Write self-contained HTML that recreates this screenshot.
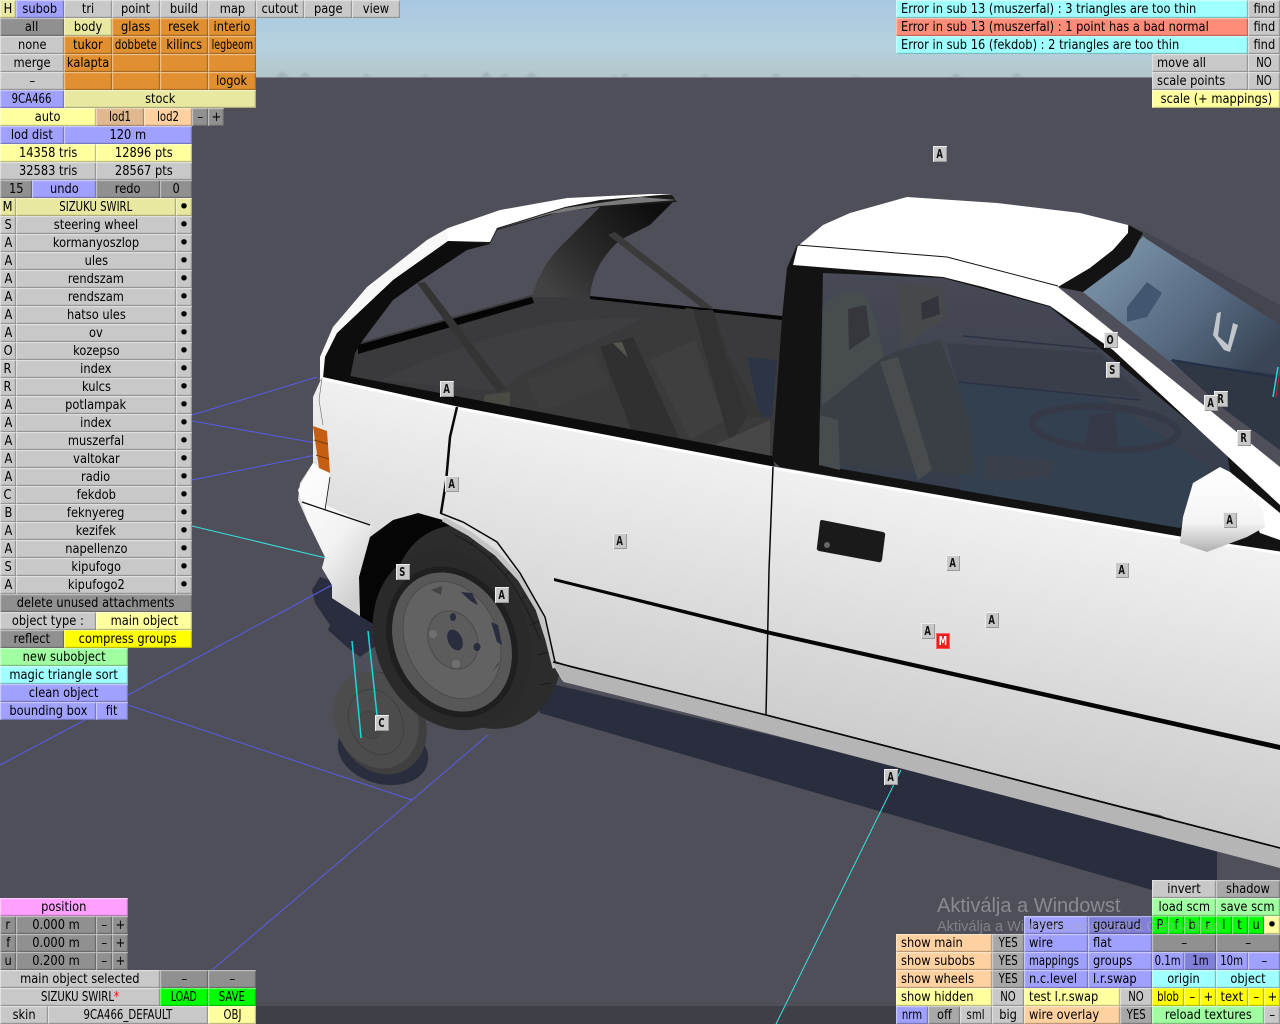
<!DOCTYPE html>
<html><head><meta charset="utf-8"><style>
html,body{margin:0;padding:0;width:1280px;height:1024px;overflow:hidden;background:#4f4f59}
svg{position:absolute;left:0;top:0}
.b{position:absolute;height:18px;display:flex;justify-content:center;align-items:center;font:13px/18px "DejaVu Sans",sans-serif;color:#000;white-space:pre;overflow:hidden;box-sizing:border-box;box-shadow:inset 2px 2px 1px -1px rgba(255,255,255,.5),inset -2px -2px 1px -1px rgba(0,0,0,.3)}
.b i{font-style:normal;flex:none;position:relative;top:1px;transform:scaleX(.88);transform-origin:50% 50%}
.b i.a{transform:scaleX(.78)}
.b i.w{transform:scaleX(.73)}
.b i.q{font-size:19px;transform:none;top:0}
.l{justify-content:flex-start;padding-left:5px}
.l i{transform-origin:0 50%!important}
.g{background:#c8c8c8}.d{background:#909090}.h{background:#a8a8a8}.u{background:#a0a0ff}.v{background:#8080d8}.y{background:#ffffa0}.p{background:#e8e8a0}.o{background:#e09030}.e{background:#ffd0a0}.t{background:#e0b890}.n{background:#a0ffa0}.c{background:#a0ffff}.r{background:#ff8c78}.s{background:#ffff00}.k{background:#00ff00}.f{background:#ffa0ff}
.m{position:absolute;width:14px;height:16px;margin:-.5px 0 0 -.5px;background:#c8c8c8;display:flex;justify-content:center;font:bold 12px/16px "DejaVu Sans",sans-serif;color:#111;box-shadow:inset 1px 1px 0 #eee,inset -1px -1px 0 #999}
.m i{font-style:normal;flex:none;transform:scaleX(.7)}
.wm{position:absolute;color:#8a8a92;font-family:"Liberation Sans",sans-serif;white-space:pre}
</style></head><body>
<svg width="1280" height="1024" viewBox="0 0 1280 1024">
<defs>
<linearGradient id="sky" x1="0" y1="0" x2="0" y2="1"><stop offset="0" stop-color="#a9c8e2"/><stop offset=".6" stop-color="#b5d0de"/><stop offset="1" stop-color="#b3c6ca"/></linearGradient>
<linearGradient id="body" gradientUnits="userSpaceOnUse" x1="860" y1="470" x2="800" y2="780"><stop offset="0" stop-color="#f2f2f2"/><stop offset=".5" stop-color="#dcdcdc"/><stop offset="1" stop-color="#c6c6c6"/></linearGradient>
<linearGradient id="glass" gradientUnits="userSpaceOnUse" x1="1090" y1="250" x2="1230" y2="390"><stop offset="0" stop-color="#7e97ad"/><stop offset=".55" stop-color="#5a6e86"/><stop offset="1" stop-color="#3a4658"/></linearGradient>
<linearGradient id="side" gradientUnits="userSpaceOnUse" x1="0" y1="275" x2="0" y2="520"><stop offset="0" stop-color="#474955"/><stop offset=".45" stop-color="#3e434f"/><stop offset="1" stop-color="#333a49"/></linearGradient>
<linearGradient id="pil" gradientUnits="userSpaceOnUse" x1="650" y1="205" x2="555" y2="295"><stop offset="0" stop-color="#0e0e0e"/><stop offset=".6" stop-color="#2a2a2a"/><stop offset="1" stop-color="#424242"/></linearGradient>
<linearGradient id="mir" x1="0" y1="0" x2="0" y2="1"><stop offset="0" stop-color="#fff"/><stop offset=".65" stop-color="#f4f4f4"/><stop offset="1" stop-color="#b0b0b0"/></linearGradient>
<linearGradient id="rr" x1="0" y1="0" x2=".6" y2="1"><stop offset="0" stop-color="#fff"/><stop offset=".6" stop-color="#f2f2f2"/><stop offset="1" stop-color="#cfcfcf"/></linearGradient>
<filter id="bl"><feGaussianBlur stdDeviation="1.2"/></filter>
</defs>
<rect width="1280" height="78" fill="url(#sky)"/>
<g fill="#a2b2b7" filter="url(#bl)"><path d="M275 78L282 71L290 78ZM298 78L305 72L312 78ZM362 78L366 73L371 78ZM420 78L425 74L430 78ZM480 78L486 71L492 78ZM500 78L505 73L510 78ZM525 78L531 72L538 78ZM610 78L615 75L620 78ZM700 78L705 74L710 78ZM770 78L776 73L782 78ZM950 78L956 73L962 78ZM1010 78L1017 73L1024 78ZM620 78L625 73L630 78ZM850 78L855 75L860 78Z"/></g>
<rect y="77" width="1280" height="1.5" fill="#7c8288"/>
<rect y="78" width="1280" height="946" fill="#4f4f59"/>
<rect y="1006" width="1280" height="18" fill="#3f3f47"/>
<!-- shadows -->
<path d="M535 680L1217 840V910L1152 890L540 713Z" fill="#2a2d3e"/>
<path d="M320 577L312 590L315 603L330 625L328 630L347 647L360 657L380 643L400 620L360 590Z" fill="#2a2d3e"/>
<ellipse cx="383" cy="752" rx="46" ry="32" fill="#2a2d3e" transform="rotate(15 383 752)"/>
<!-- ground lines -->
<g stroke="#5a5ae8" stroke-width="1" fill="none">
<path d="M192 415L317 377M192 421L316 443M192 480L316 455M128 695L332 585M128 705L412 800L488 735M412 800L212 970M0 765L85 720"/>
</g>
<path d="M192 526L326 558M901 770L776 1024" stroke="#38e0e0" stroke-width="1" fill="none"/>
<!-- brake drum -->
<ellipse cx="381" cy="723" rx="44" ry="53" fill="#3f3f3f" transform="rotate(-25 381 723)"/>
<ellipse cx="376" cy="720" rx="41" ry="50" fill="#4c4c4c" transform="rotate(-25 376 720)"/>
<ellipse cx="376" cy="722" rx="26" ry="34" fill="none" stroke="#404040" transform="rotate(-25 376 722)"/>
<ellipse cx="370" cy="725" rx="11" ry="14" fill="#484848" stroke="#404040" transform="rotate(-25 370 725)"/>
<path d="M352 641L361 738M368 631L377 715" stroke="#17d8d8" stroke-width="1.5" fill="none"/>
<!-- interior rear -->
<path d="M355 353L358 343L532 295L590 297L782 318L772 460L350 378Z" fill="#3a3a3c"/>
<path d="M358 345L532 297L534 303L358 354Z" fill="#050505"/>
<path d="M590 296L782 316V320L590 299Z" fill="#050505"/>
<path d="M380 380Q480 335 560 322Q640 315 640 320L520 375L505 392Z" fill="#3e3e40"/>
<path d="M747 357L777 360L772 417L760 417Z" fill="#2c3546"/>
<path d="M600 207L673 202L650 225L620 240Q592 265 590 297L532 297Q540 265 567 240Z" fill="url(#pil)"/>
<path d="M417 283L425 282L507 390L497 392Z" fill="#343434"/>
<path d="M608 235L615 232L713 308L702 308Z" fill="#3a3a3a"/>
<path d="M507 387Q515 375 527 375L593 350L613 343L633 330L687 308L713 312L747 417L770 420L771 458L540 412L500 400Z" fill="#3a3a3a"/>
<path d="M527 380L593 352L610 385L560 405L540 410Z" fill="#3d3d3d"/>
<path d="M650 360L695 340L725 420L690 440Z" fill="#3f3f3f"/>
<path d="M600 347L633 337L680 440L632 432Z" fill="#303030"/>
<path d="M693 310L713 310L747 417L730 443L718 400Z" fill="#323232"/>
<path d="M713 312L725 350L763 417L748 417L725 355Z" fill="#363636"/>
<path d="M710 447L770 420L770 457Z" fill="#474747"/>
<path d="M485 395L510 392L510 408L483 404Z" fill="#4a4a44"/>
<path d="M613 343L622 342L628 358Z" fill="#56564e"/>
<!-- rear black pillars -->
<path d="M448 240L490 244L467 250L417 283L393 300L363 340L355 353L350 378L323 378L325 353L337 333L393 280Z" fill="#0d0d0d"/>
<path d="M350 376L772 456L775 467L457 407L323 378Z" fill="#0d0d0d"/>
<path d="M672 195L677 202L600 207L560 212L497 230L490 244L448 240L448 228L500 210L567 198L650 194Z" fill="#1a1a1a"/>
<path d="M448 228L500 210L567 198L650 194L672 194L600 200L565 207L497 228L490 242L448 241Z" fill="#fff"/>
<path d="M497 229L565 208L640 197L677 200L600 206L550 214Z" fill="#7b7b7b"/>
<path d="M320 378L320 357L333 327L367 287L427 240L448 228L448 241L393 280L337 333L325 357L323 378Z" fill="#f8f8f8"/>
<!-- front window & roof -->
<path d="M772 460L782 318L787 268L797 245L1058 287L1280 467V552L1180 537L780 467Z" fill="#131313"/>
<path d="M819 465L823 273L943 278L1050 307L1227 453L1230 472L1180 528Z" fill="url(#side)"/>
<path d="M957 383L1100 395L1210 467L1180 528L960 490Z" fill="#334050"/>
<path d="M947 343L1100 353L1143 397L957 383Z" fill="#3a3e4b"/>
<path d="M963 336L1097 349" stroke="#2a3244" stroke-width="1.5" fill="none"/>
<path d="M958 382L1140 400" stroke="#2a3244" stroke-width="1.5" fill="none"/>
<path d="M823 310Q830 292 860 290Q870 295 880 340L885 360L850 392L822 408Z" fill="#474c4f"/>
<path d="M848 309L866 305L870 336L849 350Z" fill="#35373d"/>
<path d="M897 282L943 287L947 317L900 350Z" fill="#45494c"/>
<path d="M921 303L938 296L940 314L922 320Z" fill="#33353c"/>
<path d="M820 407L883 357L900 350L940 340L970 420L975 475L819 465Z" fill="#3a3f45"/>
<path d="M880 362L898 357L932 470L918 480Z" fill="#484c4e"/>
<path d="M820 415L838 420L840 470L819 465Z" fill="#474c4f"/>
<path d="M985 455L1055 460L1050 478L985 480Z" fill="#3a3f4c"/>
<ellipse cx="1105" cy="428" rx="73" ry="21" fill="none" stroke="#363a48" stroke-width="7" transform="rotate(4 1105 428)"/>
<path d="M1090 415L1115 412L1118 445L1085 447Z" fill="#363a48"/>
<path d="M1145 235L1280 315V450L1083 292Z" fill="url(#glass)"/>
<path d="M1138 228L1280 305V325L1145 238Z" fill="#45454f"/>
<path d="M1127 307L1147 282L1162 293L1147 317L1127 322Z" fill="#435670"/>
<path d="M1217 313L1213 335L1224 350L1230 352L1238 325L1233 323L1228 345L1218 336L1221 312Z" fill="#c0c6cc"/>
<path d="M1170 360L1280 375V450L1225 410Z" fill="#2f3745"/>
<path d="M1172 360L1280 378" stroke="#223048" stroke-width="2" fill="none"/>
<path d="M1278 367L1273 397" stroke="#1ed8e0" stroke-width="1.5" fill="none"/>
<path d="M1280 370L1276 397" stroke="#d02030" stroke-width="1" fill="none"/>
<path d="M798 246L823 225L850 213L907 197L997 203L1080 213L1128 225L1128 233L1113 250L1090 268L1058 287Z" fill="#fff"/>
<path d="M1129 225L1143 233L1130 257L1083 292L1058 287L1090 268L1113 250L1128 233Z" fill="#131313"/>
<path d="M798 245L947 258L1058 287L1280 467V505L1113 350L1050 306L983 287L943 277L793 265Z" fill="#fff"/>
<path d="M798 245L947 257L1058 286" fill="none" stroke="#111" stroke-width="1"/>
<path d="M1230 472L1280 513V540L1260 533Z" fill="#fff"/>
<!-- arch & tyre (under body) -->
<path d="M359 577L370 537L393 520L418 513L443 517L477 530L470 560L400 640L360 616Z" fill="#050505"/>
<ellipse cx="477" cy="627" rx="80" ry="106" fill="#2c2c2c" transform="rotate(-25 477 627)"/>
<ellipse cx="452" cy="640" rx="76" ry="93" fill="#2a2a2a" transform="rotate(-25 452 640)"/>
<path d="M455 535Q510 560 540 640M470 545L476 538M490 558L498 551M505 575L514 568M520 600L530 593M530 625L541 620M538 655L549 652M540 685L551 683" stroke="#1c1c1c" stroke-width="1" fill="none"/>
<ellipse cx="452" cy="642" rx="63" ry="78" fill="#1f1f1f" transform="rotate(-25 452 642)"/>
<ellipse cx="452" cy="642" rx="57" ry="72" fill="#585858" transform="rotate(-25 452 642)"/>
<ellipse cx="452" cy="640" rx="46" ry="61" fill="#626262" stroke="#4c4c4c" transform="rotate(-25 452 640)"/>
<ellipse cx="453" cy="640" rx="24" ry="30" fill="#5c5c5c" stroke="#4a4a4a" transform="rotate(-25 453 640)"/>
<ellipse cx="455" cy="640" rx="7" ry="11" fill="#2a2d3e" transform="rotate(-25 455 640)"/>
<ellipse cx="453" cy="617" rx="3" ry="4" fill="#2a2d3e"/><ellipse cx="477" cy="647" rx="3.5" ry="4" fill="#2a2d3e"/><circle cx="456" cy="664" r="4" fill="#707070"/><circle cx="433" cy="634" r="4" fill="#707070"/>
<path d="M461 592Q470 602 478 605L472 593ZM491 622L497 642L502 645L498 625ZM498 665L492 672L499 662Z" fill="#2a2d3e"/>
<path d="M431 590L442 586L441 595Z" fill="#444"/>
<!-- body -->
<path d="M322 377L457 407L773 467L1180 537L1280 552V868L1160 815L564 682L562 680L555 668L548 640L538 610L520 580L497 555L470 535L443 520L418 513L393 520L370 537L359 577L360 616L332 598L332 585L322 568L325 557L307 520L298 500L300 483L313 463L313 397Z" fill="url(#body)"/>
<path d="M298 490L313 463L330 473L326 505L372 526L358 577L360 616L332 598L332 585L322 568L325 557L307 520Z" fill="url(#rr)"/>
<path d="M320 378L457 408L773 468L1180 538L1280 553" fill="none" stroke="#fff" stroke-width="3"/>
<path d="M443 519L470 534L497 554L520 579L538 609L548 640L555 668" fill="none" stroke="#c4c4c4" stroke-width="5"/>
<!-- taillight -->
<path d="M313 426L327 431L330 473L319 468Z" fill="#c55e10"/>
<path d="M314 440L328 444M316 455L329 459" stroke="#7a3a08" stroke-width="1"/>
<!-- body lines -->
<g fill="none" stroke="#080808">
<path d="M457 407L450 437L446 482L441 513" stroke-width="2.5"/>
<path d="M440 513L463 522L497 542L520 573L545 617L555 662L575 668L766 715L1280 848" stroke-width="1.5"/>
<path d="M773 467L769 570L766 715" stroke-width="1.5"/>
<path d="M330 477L325 510" stroke-width=".8"/>
<path d="M302 502L370 525" stroke-width="1.2"/>
</g>
<path d="M322 378L319 400L323 425" fill="none" stroke="#666" stroke-width=".6"/>
<path d="M554 578L766 630L1280 745V750L766 634L554 581Z" fill="#050505"/>
<path d="M564 682L766 733L1280 868V849L766 716L553 663Z" fill="#b5b5b5"/>
<path d="M553 662L766 715L1280 848" fill="none" stroke="#080808" stroke-width="1.5"/>
<!-- handle -->
<path d="M822 520L883 532Q886 533 885 536L882 560Q881 563 878 562L819 551Q816 550 817 547L820 522Q820 520 822 520Z" fill="#1a1a1a"/>
<circle cx="827" cy="545" r="3" fill="#666"/>
<!-- mirror -->
<path d="M1193 483L1220 467L1230 472L1263 510L1265 527L1247 537L1207 552L1180 543L1183 517Z" fill="url(#mir)"/>
</svg>
<div class="wm" style="left:937px;top:895px;font-size:20px">Aktiválja a Windowst</div>

<!-- top left -->
<div class="b p" style="left:0;top:0;width:16px"><i>H</i></div><div class="b u" style="left:16px;top:0;width:48px"><i>subob</i></div><div class="b g" style="left:64px;top:0;width:48px"><i>tri</i></div><div class="b g" style="left:112px;top:0;width:48px"><i>point</i></div><div class="b g" style="left:160px;top:0;width:48px"><i>build</i></div><div class="b g" style="left:208px;top:0;width:48px"><i>map</i></div><div class="b g" style="left:256px;top:0;width:48px"><i>cutout</i></div><div class="b g" style="left:304px;top:0;width:48px"><i>page</i></div><div class="b g" style="left:352px;top:0;width:48px"><i>view</i></div>
<div class="b d" style="left:0;top:18px;width:64px"><i>all</i></div><div class="b p" style="left:64px;top:18px;width:48px"><i>body</i></div><div class="b o" style="left:112px;top:18px;width:48px"><i>glass</i></div><div class="b o" style="left:160px;top:18px;width:48px"><i>resek</i></div><div class="b o" style="left:208px;top:18px;width:48px"><i>interio</i></div>
<div class="b g" style="left:0;top:36px;width:64px"><i>none</i></div><div class="b o" style="left:64px;top:36px;width:48px"><i>tukor</i></div><div class="b o" style="left:112px;top:36px;width:48px"><i class="a">dobbete</i></div><div class="b o" style="left:160px;top:36px;width:48px"><i>kilincs</i></div><div class="b o" style="left:208px;top:36px;width:48px"><i class="w">legbeom</i></div>
<div class="b g" style="left:0;top:54px;width:64px"><i>merge</i></div><div class="b o" style="left:64px;top:54px;width:48px"><i>kalapta</i></div><div class="b o" style="left:112px;top:54px;width:48px"></div><div class="b o" style="left:160px;top:54px;width:48px"></div><div class="b o" style="left:208px;top:54px;width:48px"></div>
<div class="b g" style="left:0;top:72px;width:64px"><i>–</i></div><div class="b o" style="left:64px;top:72px;width:48px"></div><div class="b o" style="left:112px;top:72px;width:48px"></div><div class="b o" style="left:160px;top:72px;width:48px"></div><div class="b o" style="left:208px;top:72px;width:48px"><i>logok</i></div>
<div class="b u" style="left:0;top:90px;width:64px"><i class="a">9CA466</i></div><div class="b p" style="left:64px;top:90px;width:192px"><i>stock</i></div>
<div class="b y" style="left:0;top:108px;width:96px"><i>auto</i></div><div class="b t" style="left:96px;top:108px;width:48px"><i class="a">lod1</i></div><div class="b e" style="left:144px;top:108px;width:48px"><i class="a">lod2</i></div><div class="b d" style="left:192px;top:108px;width:16px"><i>–</i></div><div class="b d" style="left:208px;top:108px;width:16px"><i>+</i></div>
<div class="b u" style="left:0;top:126px;width:64px"><i>lod dist</i></div><div class="b u" style="left:64px;top:126px;width:128px"><i>120 m</i></div>
<div class="b y" style="left:0;top:144px;width:96px"><i>14358 tris</i></div><div class="b y" style="left:96px;top:144px;width:96px"><i>12896 pts</i></div>
<div class="b g" style="left:0;top:162px;width:96px"><i>32583 tris</i></div><div class="b g" style="left:96px;top:162px;width:96px"><i>28567 pts</i></div>
<div class="b d" style="left:0;top:180px;width:32px"><i>15</i></div><div class="b u" style="left:32px;top:180px;width:64px"><i>undo</i></div><div class="b d" style="left:96px;top:180px;width:64px"><i>redo</i></div><div class="b d" style="left:160px;top:180px;width:32px"><i>0</i></div>
<div class="b p" style="left:0;top:198px;width:16px"><i>M</i></div><div class="b p" style="left:16px;top:198px;width:160px"><i class="a">SIZUKU SWIRL</i></div><div class="b p" style="left:176px;top:198px;width:16px"><i class="q">•</i></div>
<!-- list -->
<div class="b g" style="left:0;top:216px;width:16px"><i>S</i></div><div class="b g" style="left:16px;top:216px;width:160px"><i>steering wheel</i></div><div class="b g" style="left:176px;top:216px;width:16px"><i class="q">•</i></div>
<div class="b g" style="left:0;top:234px;width:16px"><i>A</i></div><div class="b g" style="left:16px;top:234px;width:160px"><i>kormanyoszlop</i></div><div class="b g" style="left:176px;top:234px;width:16px"><i class="q">•</i></div>
<div class="b g" style="left:0;top:252px;width:16px"><i>A</i></div><div class="b g" style="left:16px;top:252px;width:160px"><i>ules</i></div><div class="b g" style="left:176px;top:252px;width:16px"><i class="q">•</i></div>
<div class="b g" style="left:0;top:270px;width:16px"><i>A</i></div><div class="b g" style="left:16px;top:270px;width:160px"><i>rendszam</i></div><div class="b g" style="left:176px;top:270px;width:16px"><i class="q">•</i></div>
<div class="b g" style="left:0;top:288px;width:16px"><i>A</i></div><div class="b g" style="left:16px;top:288px;width:160px"><i>rendszam</i></div><div class="b g" style="left:176px;top:288px;width:16px"><i class="q">•</i></div>
<div class="b g" style="left:0;top:306px;width:16px"><i>A</i></div><div class="b g" style="left:16px;top:306px;width:160px"><i>hatso ules</i></div><div class="b g" style="left:176px;top:306px;width:16px"><i class="q">•</i></div>
<div class="b g" style="left:0;top:324px;width:16px"><i>A</i></div><div class="b g" style="left:16px;top:324px;width:160px"><i>ov</i></div><div class="b g" style="left:176px;top:324px;width:16px"><i class="q">•</i></div>
<div class="b g" style="left:0;top:342px;width:16px"><i>O</i></div><div class="b g" style="left:16px;top:342px;width:160px"><i>kozepso</i></div><div class="b g" style="left:176px;top:342px;width:16px"><i class="q">•</i></div>
<div class="b g" style="left:0;top:360px;width:16px"><i>R</i></div><div class="b g" style="left:16px;top:360px;width:160px"><i>index</i></div><div class="b g" style="left:176px;top:360px;width:16px"><i class="q">•</i></div>
<div class="b g" style="left:0;top:378px;width:16px"><i>R</i></div><div class="b g" style="left:16px;top:378px;width:160px"><i>kulcs</i></div><div class="b g" style="left:176px;top:378px;width:16px"><i class="q">•</i></div>
<div class="b g" style="left:0;top:396px;width:16px"><i>A</i></div><div class="b g" style="left:16px;top:396px;width:160px"><i>potlampak</i></div><div class="b g" style="left:176px;top:396px;width:16px"><i class="q">•</i></div>
<div class="b g" style="left:0;top:414px;width:16px"><i>A</i></div><div class="b g" style="left:16px;top:414px;width:160px"><i>index</i></div><div class="b g" style="left:176px;top:414px;width:16px"><i class="q">•</i></div>
<div class="b g" style="left:0;top:432px;width:16px"><i>A</i></div><div class="b g" style="left:16px;top:432px;width:160px"><i>muszerfal</i></div><div class="b g" style="left:176px;top:432px;width:16px"><i class="q">•</i></div>
<div class="b g" style="left:0;top:450px;width:16px"><i>A</i></div><div class="b g" style="left:16px;top:450px;width:160px"><i>valtokar</i></div><div class="b g" style="left:176px;top:450px;width:16px"><i class="q">•</i></div>
<div class="b g" style="left:0;top:468px;width:16px"><i>A</i></div><div class="b g" style="left:16px;top:468px;width:160px"><i>radio</i></div><div class="b g" style="left:176px;top:468px;width:16px"><i class="q">•</i></div>
<div class="b g" style="left:0;top:486px;width:16px"><i>C</i></div><div class="b g" style="left:16px;top:486px;width:160px"><i>fekdob</i></div><div class="b g" style="left:176px;top:486px;width:16px"><i class="q">•</i></div>
<div class="b g" style="left:0;top:504px;width:16px"><i>B</i></div><div class="b g" style="left:16px;top:504px;width:160px"><i>feknyereg</i></div><div class="b g" style="left:176px;top:504px;width:16px"><i class="q">•</i></div>
<div class="b g" style="left:0;top:522px;width:16px"><i>A</i></div><div class="b g" style="left:16px;top:522px;width:160px"><i>kezifek</i></div><div class="b g" style="left:176px;top:522px;width:16px"><i class="q">•</i></div>
<div class="b g" style="left:0;top:540px;width:16px"><i>A</i></div><div class="b g" style="left:16px;top:540px;width:160px"><i>napellenzo</i></div><div class="b g" style="left:176px;top:540px;width:16px"><i class="q">•</i></div>
<div class="b g" style="left:0;top:558px;width:16px"><i>S</i></div><div class="b g" style="left:16px;top:558px;width:160px"><i>kipufogo</i></div><div class="b g" style="left:176px;top:558px;width:16px"><i class="q">•</i></div>
<div class="b g" style="left:0;top:576px;width:16px"><i>A</i></div><div class="b g" style="left:16px;top:576px;width:160px"><i>kipufogo2</i></div><div class="b g" style="left:176px;top:576px;width:16px"><i class="q">•</i></div>
<div class="b d" style="left:0;top:594px;width:192px"><i>delete unused attachments</i></div>
<div class="b g" style="left:0;top:612px;width:96px"><i>object type :</i></div><div class="b y" style="left:96px;top:612px;width:96px"><i>main object</i></div>
<div class="b d" style="left:0;top:630px;width:64px"><i>reflect</i></div><div class="b s" style="left:64px;top:630px;width:128px"><i>compress groups</i></div>
<div class="b n" style="left:0;top:648px;width:128px"><i>new subobject</i></div>
<div class="b c" style="left:0;top:666px;width:128px"><i>magic triangle sort</i></div>
<div class="b u" style="left:0;top:684px;width:128px"><i>clean object</i></div>
<div class="b u" style="left:0;top:702px;width:96px"><i>bounding box</i></div><div class="b u" style="left:96px;top:702px;width:32px"><i>fit</i></div>
<!-- bottom left -->
<div class="b f" style="left:0;top:898px;width:128px"><i>position</i></div>
<div class="b d" style="left:0;top:916px;width:16px"><i>r</i></div><div class="b d" style="left:16px;top:916px;width:80px"><i>0.000 m</i></div><div class="b d" style="left:96px;top:916px;width:16px"><i>–</i></div><div class="b d" style="left:112px;top:916px;width:16px"><i>+</i></div>
<div class="b d" style="left:0;top:934px;width:16px"><i>f</i></div><div class="b d" style="left:16px;top:934px;width:80px"><i>0.000 m</i></div><div class="b d" style="left:96px;top:934px;width:16px"><i>–</i></div><div class="b d" style="left:112px;top:934px;width:16px"><i>+</i></div>
<div class="b d" style="left:0;top:952px;width:16px"><i>u</i></div><div class="b d" style="left:16px;top:952px;width:80px"><i>0.200 m</i></div><div class="b d" style="left:96px;top:952px;width:16px"><i>–</i></div><div class="b d" style="left:112px;top:952px;width:16px"><i>+</i></div>
<div class="b g" style="left:0;top:970px;width:160px"><i>main object selected</i></div><div class="b d" style="left:160px;top:970px;width:48px"><i>–</i></div><div class="b d" style="left:208px;top:970px;width:48px"><i>–</i></div>
<div class="b g" style="left:0;top:988px;width:160px"><i class="a">SIZUKU SWIRL<span style="color:#f00">*</span></i></div><div class="b k" style="left:160px;top:988px;width:48px"><i class="w">LOAD</i></div><div class="b k" style="left:208px;top:988px;width:48px"><i class="a">SAVE</i></div>
<div class="b g" style="left:0;top:1006px;width:48px"><i>skin</i></div><div class="b g" style="left:48px;top:1006px;width:160px"><i class="a">9CA466_DEFAULT</i></div><div class="b y" style="left:208px;top:1006px;width:48px"><i class="a">OBJ</i></div>
<!-- top right -->
<div class="b c l" style="left:896px;top:0;width:352px"><i>Error in sub 13 (muszerfal) : 3 triangles are too thin</i></div><div class="b g" style="left:1248px;top:0;width:32px"><i>find</i></div>
<div class="b r l" style="left:896px;top:18px;width:352px"><i>Error in sub 13 (muszerfal) : 1 point has a bad normal</i></div><div class="b g" style="left:1248px;top:18px;width:32px"><i>find</i></div>
<div class="b c l" style="left:896px;top:36px;width:352px"><i>Error in sub 16 (fekdob) : 2 triangles are too thin</i></div><div class="b g" style="left:1248px;top:36px;width:32px"><i>find</i></div>
<div class="b g l" style="left:1152px;top:54px;width:96px"><i>move all</i></div><div class="b g" style="left:1248px;top:54px;width:32px"><i class="a">NO</i></div>
<div class="b g l" style="left:1152px;top:72px;width:96px"><i>scale points</i></div><div class="b g" style="left:1248px;top:72px;width:32px"><i class="a">NO</i></div>
<div class="b y" style="left:1152px;top:90px;width:128px"><i>scale (+ mappings)</i></div>
<!-- bottom right -->
<div class="b g" style="left:1152px;top:880px;width:64px"><i>invert</i></div><div class="b h" style="left:1216px;top:880px;width:64px"><i>shadow</i></div>
<div class="b n" style="left:1152px;top:898px;width:64px"><i>load scm</i></div><div class="b n" style="left:1216px;top:898px;width:64px"><i>save scm</i></div>
<div class="b u l" style="left:1024px;top:916px;width:64px"><i>layers</i></div><div class="b v l" style="left:1088px;top:916px;width:64px"><i>gouraud</i></div>
<div class="b k" style="left:1152px;top:916px;width:16px"><i>P</i></div><div class="b k" style="left:1168px;top:916px;width:16px"><i>f</i></div><div class="b k" style="left:1184px;top:916px;width:16px"><i>b</i></div><div class="b k" style="left:1200px;top:916px;width:16px"><i>r</i></div><div class="b k" style="left:1216px;top:916px;width:16px"><i>l</i></div><div class="b k" style="left:1232px;top:916px;width:16px"><i>t</i></div><div class="b k" style="left:1248px;top:916px;width:16px"><i>u</i></div><div class="b y" style="left:1264px;top:916px;width:16px"><i class="q">•</i></div>
<div class="b e l" style="left:896px;top:934px;width:96px"><i>show main</i></div><div class="b h" style="left:992px;top:934px;width:32px"><i class="a">YES</i></div><div class="b u l" style="left:1024px;top:934px;width:64px"><i>wire</i></div><div class="b u l" style="left:1088px;top:934px;width:64px"><i>flat</i></div><div class="b d" style="left:1152px;top:934px;width:64px"><i>–</i></div><div class="b d" style="left:1216px;top:934px;width:64px"><i>–</i></div>
<div class="b e l" style="left:896px;top:952px;width:96px"><i>show subobs</i></div><div class="b h" style="left:992px;top:952px;width:32px"><i class="a">YES</i></div><div class="b u l" style="left:1024px;top:952px;width:64px"><i class="a">mappings</i></div><div class="b u l" style="left:1088px;top:952px;width:64px"><i>groups</i></div><div class="b u" style="left:1152px;top:952px;width:32px"><i class="a">0.1m</i></div><div class="b v" style="left:1184px;top:952px;width:32px"><i class="a">1m</i></div><div class="b u" style="left:1216px;top:952px;width:32px"><i class="a">10m</i></div><div class="b u" style="left:1248px;top:952px;width:32px"><i>–</i></div>
<div class="b e l" style="left:896px;top:970px;width:96px"><i>show wheels</i></div><div class="b h" style="left:992px;top:970px;width:32px"><i class="a">YES</i></div><div class="b u l" style="left:1024px;top:970px;width:64px"><i>n.c.level</i></div><div class="b u l" style="left:1088px;top:970px;width:64px"><i>l.r.swap</i></div><div class="b c" style="left:1152px;top:970px;width:64px"><i>origin</i></div><div class="b c" style="left:1216px;top:970px;width:64px"><i>object</i></div>
<div class="b y l" style="left:896px;top:988px;width:96px"><i>show hidden</i></div><div class="b g" style="left:992px;top:988px;width:32px"><i class="a">NO</i></div><div class="b y l" style="left:1024px;top:988px;width:96px"><i>test l.r.swap</i></div><div class="b g" style="left:1120px;top:988px;width:32px"><i class="a">NO</i></div><div class="b s" style="left:1152px;top:988px;width:32px"><i class="a">blob</i></div><div class="b s" style="left:1184px;top:988px;width:16px"><i>–</i></div><div class="b s" style="left:1200px;top:988px;width:16px"><i>+</i></div><div class="b s" style="left:1216px;top:988px;width:32px"><i>text</i></div><div class="b s" style="left:1248px;top:988px;width:16px"><i>–</i></div><div class="b s" style="left:1264px;top:988px;width:16px"><i>+</i></div>
<div class="b u" style="left:896px;top:1006px;width:32px"><i class="a">nrm</i></div><div class="b h" style="left:928px;top:1006px;width:32px"><i>off</i></div><div class="b g" style="left:960px;top:1006px;width:32px"><i class="a">sml</i></div><div class="b g" style="left:992px;top:1006px;width:32px"><i>big</i></div><div class="b e l" style="left:1024px;top:1006px;width:96px"><i>wire overlay</i></div><div class="b h" style="left:1120px;top:1006px;width:32px"><i class="a">YES</i></div><div class="b n" style="left:1152px;top:1006px;width:112px"><i>reload textures</i></div><div class="b g" style="left:1264px;top:1006px;width:16px"><i>–</i></div>
<div class="wm" style="left:937px;top:919px;font-size:14.5px;opacity:.55;color:#aaa">Aktiválja a Windows rendszert a Gépházban.</div>
<!-- markers -->
<div class="m" style="left:440px;top:381px"><i>A</i></div><div class="m" style="left:445px;top:476px"><i>A</i></div><div class="m" style="left:613px;top:533px"><i>A</i></div><div class="m" style="left:946px;top:555px"><i>A</i></div><div class="m" style="left:1115px;top:562px"><i>A</i></div><div class="m" style="left:985px;top:612px"><i>A</i></div><div class="m" style="left:921px;top:623px"><i>A</i></div>
<div class="m" style="left:936px;top:633px;background:#e82020;color:#fff;box-shadow:inset 1px 1px 0 #f66,inset -1px -1px 0 #f55"><i>M</i></div>
<div class="m" style="left:396px;top:564px"><i>S</i></div><div class="m" style="left:495px;top:587px"><i>A</i></div><div class="m" style="left:375px;top:715px"><i>C</i></div><div class="m" style="left:884px;top:769px"><i>A</i></div><div class="m" style="left:933px;top:146px"><i>A</i></div><div class="m" style="left:1104px;top:332px"><i>O</i></div><div class="m" style="left:1106px;top:362px"><i>S</i></div><div class="m" style="left:1214px;top:391px"><i>R</i></div><div class="m" style="left:1204px;top:395px"><i>A</i></div><div class="m" style="left:1237px;top:430px"><i>R</i></div><div class="m" style="left:1223px;top:512px"><i>A</i></div>
</body></html>
